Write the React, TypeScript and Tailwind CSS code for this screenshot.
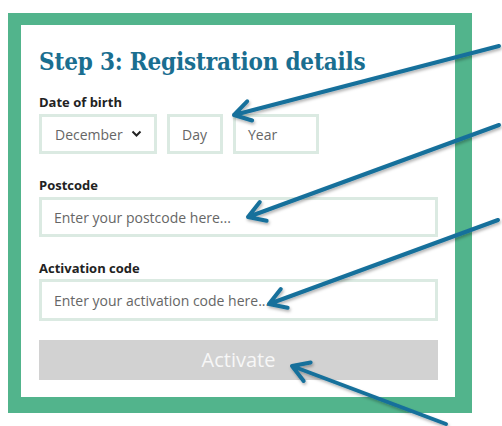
import React from "react";

const sans = { fontFamily: '"Open Sans", "Liberation Sans", sans-serif' };

function Arrow({ x1, y1, x2, y2 }: { x1: number; y1: number; x2: number; y2: number }) {
  const ang = Math.atan2(y1 - y2, x1 - x2);
  const len = 19;
  const spread = 0.55;
  const ax = x2 + len * Math.cos(ang + spread);
  const ay = y2 + len * Math.sin(ang + spread);
  const bx = x2 + len * Math.cos(ang - spread);
  const by = y2 + len * Math.sin(ang - spread);
  return (
    <g>
      <path
        d={`M${x1} ${y1} L${x2} ${y2} M${ax} ${ay} L${x2} ${y2} L${bx} ${by}`}
        stroke="#17709b"
        strokeWidth={4}
        fill="none"
        strokeLinecap="round"
        strokeLinejoin="round"
        filter="url(#sh)"
      />
    </g>
  );
}

export default function App() {
  return (
    <div className="relative w-[502px] h-[426px] bg-white overflow-hidden" style={sans}>
      <div className="pl-[8px] pt-[13px]">
        <div className="w-[464px] h-[400px] border-l-[13px] border-t-[12px] border-r-[17px] border-b-[16px] border-[#52b48c] bg-white pl-[18px] pr-[17px]">
          <h1
            className="text-[#1a6e90] text-[24px] font-bold leading-[30px] mt-[22px] font-stretch-condensed whitespace-nowrap tracking-[-0.2px]"
            style={{ fontFamily: '"DejaVu Serif Condensed", "DejaVu Serif", serif' }}
          >
            Step 3: Registration details
          </h1>
          <div className="mt-[16px] text-[13px] font-bold leading-[18px] text-[#222]">Date of birth</div>
          <div className="flex gap-[10px] mt-[3px]">
            <div className="w-[118px] h-[40px] border-[3px] border-[#dbeae2] flex items-center pl-[13px] text-[14px] text-[#666]">
              December
              <svg width="11" height="8" viewBox="0 0 11 8" className="ml-[8px]">
                <path d="M1.5 1.5 L5.5 5.5 L9.5 1.5" stroke="#222" strokeWidth="2" fill="none" />
              </svg>
            </div>
            <div className="w-[56px] h-[40px] border-[3px] border-[#dbeae2] flex items-center pl-[12px] text-[14px] text-[#666]">
              Day
            </div>
            <div className="w-[86px] h-[40px] border-[3px] border-[#dbeae2] flex items-center pl-[12px] text-[14px] text-[#666]">
              Year
            </div>
          </div>
          <div className="mt-[22px] text-[13px] font-bold leading-[18px] text-[#222]">Postcode</div>
          <div className="mt-[3px] h-[40px] border-[3px] border-[#dbeae2] flex items-center pl-[12px] text-[14px] text-[#666]">
            Enter your postcode here...
          </div>
          <div className="mt-[22px] text-[13px] font-bold leading-[18px] text-[#222]">Activation code</div>
          <div className="mt-[2px] h-[42px] border-[3px] border-[#dbeae2] flex items-center pl-[12px] text-[14px] text-[#666]">
            Enter your activation code here...
          </div>
          <div className="mt-[19px] h-[40px] bg-[#d2d2d2] flex items-center justify-center text-[20px] text-[#f7f7f7]">
            Activate
          </div>
        </div>
      </div>
      <svg className="absolute left-0 top-0" width="502" height="426" viewBox="0 0 502 426">
        <defs>
          <filter id="sh" x="-20%" y="-20%" width="140%" height="140%">
            <feDropShadow dx="1" dy="2" stdDeviation="1.5" floodColor="#000" floodOpacity="0.3" />
          </filter>
        </defs>
        <Arrow x1={499} y1={46} x2={234} y2={115} />
        <Arrow x1={499} y1={125} x2={248} y2={217} />
        <Arrow x1={498} y1={220} x2={269} y2={304} />
        <Arrow x1={446} y1={424} x2={292} y2={366} />
      </svg>
    </div>
  );
}
